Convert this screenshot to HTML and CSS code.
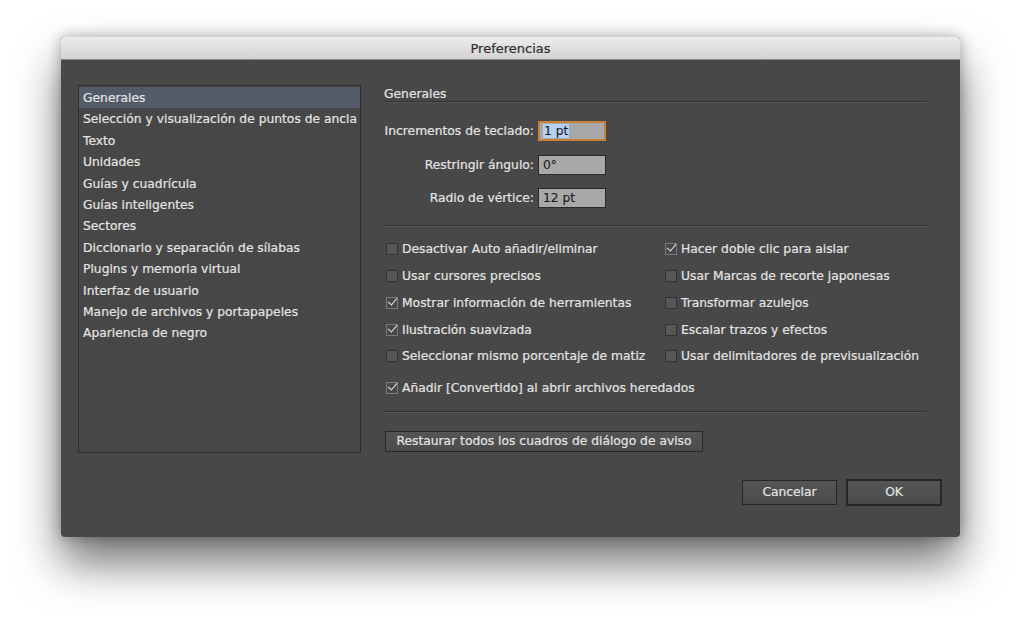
FILE: index.html
```html
<!DOCTYPE html>
<html lang="es">
<head>
<meta charset="utf-8">
<title>Preferencias</title>
<link rel="stylesheet" href="styles.css">
</head>
<body>
<div class="window">
  <div class="titlebar">Preferencias</div>
  <div class="content">
    <div class="main">
      <ul class="sidebar">
        <li class="selected">Generales</li>
        <li>Selección y visualización de puntos de ancla</li>
        <li>Texto</li>
        <li>Unidades</li>
        <li>Guías y cuadrícula</li>
        <li>Guías inteligentes</li>
        <li>Sectores</li>
        <li>Diccionario y separación de sílabas</li>
        <li>Plugins y memoria virtual</li>
        <li>Interfaz de usuario</li>
        <li>Manejo de archivos y portapapeles</li>
        <li>Apariencia de negro</li>
      </ul>
      <div class="panel">
        <div class="heading">Generales</div>
        <div class="fields">
          <div class="field"><span class="label">Incrementos de teclado:</span><span class="input focused"><span class="sel">1 pt</span></span></div>
          <div class="field"><span class="label">Restringir ángulo:</span><span class="input">0°</span></div>
          <div class="field"><span class="label">Radio de vértice:</span><span class="input">12 pt</span></div>
        </div>
        <div class="sep"></div>
        <div class="checks">
          <label class="check"><span class="box"></span>Desactivar Auto añadir/eliminar</label>
          <label class="check"><span class="box on"></span>Hacer doble clic para aislar</label>
          <label class="check"><span class="box"></span>Usar cursores precisos</label>
          <label class="check"><span class="box"></span>Usar Marcas de recorte japonesas</label>
          <label class="check"><span class="box on"></span>Mostrar información de herramientas</label>
          <label class="check"><span class="box"></span>Transformar azulejos</label>
          <label class="check"><span class="box on"></span>Ilustración suavizada</label>
          <label class="check"><span class="box"></span>Escalar trazos y efectos</label>
          <label class="check"><span class="box"></span>Seleccionar mismo porcentaje de matiz</label>
          <label class="check"><span class="box"></span>Usar delimitadores de previsualización</label>
          <label class="check wide"><span class="box on"></span>Añadir [Convertido] al abrir archivos heredados</label>
        </div>
        <div class="sep sep2"></div>
        <div class="restore-row"><button class="btn restore">Restaurar todos los cuadros de diálogo de aviso</button></div>
      </div>
    </div>
    <div class="footer">
      <button class="btn cancel">Cancelar</button>
      <button class="btn ok">OK</button>
    </div>
  </div>
</div>
</body>
</html>
```

FILE: styles.css
```css
html, body {
  margin: 0;
  padding: 0;
  background: #ffffff;
}
body {
  width: 1020px;
  height: 622px;
  overflow: hidden;
  font-family: "DejaVu Sans", "Liberation Sans", sans-serif;
  font-size: 12.3px;
  color: #e4e4e4;
  -webkit-text-stroke: 0.2px;
}
.window {
  margin: 37px 0 0 61px;
  width: 899px;
  height: 500px;
  background: #484848;
  border-radius: 4px;
  box-shadow: 0 26px 45px rgba(0,0,0,0.55), 0 0 14px rgba(0,0,0,0.3);
  display: flex;
  flex-direction: column;
  overflow: hidden;
}
.titlebar {
  height: 23px;
  line-height: 23px;
  text-align: center;
  color: #2e2e2e;
  font-size: 13px;
  background: linear-gradient(#ededed, #d2d2d2);
  border-bottom: 1px solid #8a8a8a;
  box-sizing: border-box;
}
.content {
  padding: 25px 18px 0 17px;
  display: flex;
  flex-direction: column;
}
.main {
  display: flex;
  gap: 23px;
}
.sidebar {
  list-style: none;
  margin: 0;
  padding: 1px 0 0;
  width: 283px;
  height: 368px;
  box-sizing: border-box;
  border: 1px solid #2e2e2e;
  background: #474747;
}
.sidebar li {
  height: 21.4px;
  line-height: 23px;
  padding-left: 4px;
  white-space: nowrap;
}
.sidebar li.selected {
  background: #535a68;
}
.panel {
  width: 543px;
  display: flex;
  flex-direction: column;
}
.heading {
  height: 15px;
  line-height: 17px;
  border-bottom: 1px solid #333;
  box-shadow: 0 1px 0 #555;
  margin-top: 1px;
}
.fields {
  display: flex;
  flex-direction: column;
  gap: 13.5px;
  margin-top: 19px;
}
.field {
  display: flex;
  align-items: center;
  gap: 4px;
}
.label {
  width: 150px;
  text-align: right;
}
.input {
  width: 68px;
  height: 20px;
  box-sizing: border-box;
  background: #a8a8a8;
  border: 1px solid #2a2a2a;
  color: #1a1a1a;
  line-height: 18px;
  padding-left: 4px;
  -webkit-text-stroke: 0.1px;
}
.input.focused {
  border: 2px solid #c9813a;
  line-height: 16px;
  padding-left: 3px;
}
.sel {
  background: #b5d0f2;
  padding: 0 1px;
}
.sep {
  height: 1px;
  background: #333;
  box-shadow: 0 1px 0 #555;
  margin-top: 17px;
}
.checks {
  display: grid;
  grid-template-columns: 279px 1fr;
  grid-auto-rows: 26.75px;
  margin-top: 10px;
}
.check {
  display: flex;
  align-items: center;
  gap: 4px;
  padding-left: 2px;
  white-space: nowrap;
}
.check.wide {
  grid-column: 1 / 3;
  margin-top: 9px;
}
.box {
  width: 12px;
  height: 12px;
  box-sizing: border-box;
  background: #575757;
  border: 1px solid #333;
  position: relative;
  flex: none;
}
.box.on {
  background: transparent;
  border-color: #7a7a7a;
}
.box.on::after {
  content: "";
  position: absolute;
  left: 3px;
  top: -2px;
  width: 4px;
  height: 8px;
  border-right: 1.5px solid #e6e6e6;
  border-bottom: 1.5px solid #e6e6e6;
  transform: rotate(40deg);
}
.sep2 {
  margin-top: 14px;
}
.restore-row {
  margin-top: 19px;
}
.btn {
  font-family: inherit;
  font-size: 12.3px;
  color: #e4e4e4;
  -webkit-text-stroke: 0.2px;
  background: linear-gradient(#555, #4b4b4b);
  border: 1px solid #262626;
  padding: 0;
  height: 21px;
  line-height: 19px;
}
.restore {
  width: 318px;
  margin-left: 1px;
}
.footer {
  display: flex;
  justify-content: flex-end;
  gap: 9px;
  margin-top: 27px;
}
.cancel {
  width: 95px;
  height: 25px;
}
.ok {
  width: 96px;
  height: 27px;
  margin-top: -1px;
  border: 2px solid #262626;
}
```
